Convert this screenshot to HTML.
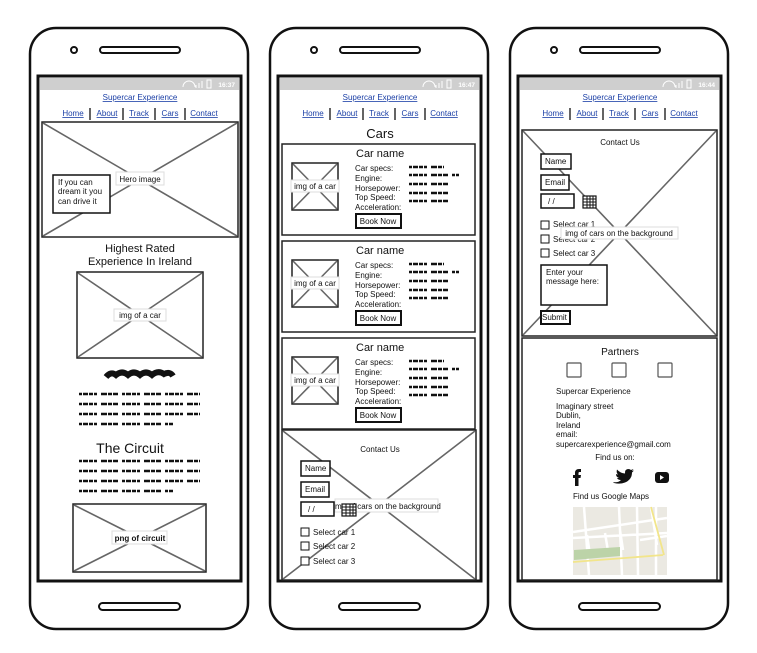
<!DOCTYPE html>
<html><head><meta charset="utf-8"><style>
html,body{margin:0;padding:0;background:#fff;width:757px;height:653px;overflow:hidden}
svg{display:block}
text{font-family:"Liberation Sans",sans-serif;fill:#111}
.lnk{fill:#1b3fa6;text-decoration:underline;font-size:8px}
.lbl{font-size:8px}
.sq{stroke:#111;stroke-width:2.4;stroke-dasharray:3 1 5 1 4 1 3 4 6 1 4 1 5 4;fill:none}
.x{stroke:#666;stroke-width:1.6}
.tag{fill:#fff;stroke:#ddd;stroke-width:1}
</style></head><body>
<svg width="757" height="653" viewBox="0 0 757 653" xmlns="http://www.w3.org/2000/svg">
<defs>
<g id="frame">
 <rect x="30" y="28" width="218" height="601" rx="26" fill="#fff" stroke="#111" stroke-width="2.5"/>
 <circle cx="74" cy="50" r="3" fill="none" stroke="#111" stroke-width="2"/>
 <rect x="100" y="47" width="80" height="6" rx="3" fill="none" stroke="#111" stroke-width="2"/>
 <rect x="99" y="603" width="81" height="7" rx="3.5" fill="none" stroke="#111" stroke-width="2"/>
 <rect x="38" y="76" width="203" height="505" fill="#fff" stroke="#111" stroke-width="3"/>
 <rect x="40" y="78" width="199" height="12" fill="#cfcfcf"/>
 <rect x="207" y="80" width="4" height="8" fill="none" stroke="#fff"/>
 <path d="M183 87 a6 6 0 0 1 12 0M196 88v-3M199 88v-5M202 88v-7" fill="none" stroke="#fff"/>
 <text x="140" y="100" text-anchor="middle" class="lnk">Supercar Experience</text>
 <text x="73" y="116" text-anchor="middle" class="lnk">Home</text>
 <text x="107" y="116" text-anchor="middle" class="lnk">About</text>
 <text x="139" y="116" text-anchor="middle" class="lnk">Track</text>
 <text x="170" y="116" text-anchor="middle" class="lnk">Cars</text>
 <text x="204" y="116" text-anchor="middle" class="lnk">Contact</text>
 <path d="M90 108v12M123 108v12M155 108v12M185 108v12" stroke="#111" stroke-width="1.3"/>
</g>
<g id="card">
 <rect x="282" y="0" width="193" height="91" fill="#fff" stroke="#222" stroke-width="1.5"/>
 <rect x="292" y="19" width="46" height="47" fill="#fff" stroke="#222" stroke-width="1.5"/>
 <path d="M293 20L337 65M337 20L293 65" class="x"/>
 <rect x="291" y="36" width="48" height="12" class="tag"/>
 <text x="315" y="45" text-anchor="middle" class="lbl">img of a car</text>
 <text x="356" y="13" style="font-size:11px">Car name</text>
 <text x="355" y="27" class="lbl">Car specs:</text>
 <text x="355" y="37" class="lbl">Engine:</text>
 <text x="355" y="47" class="lbl">Horsepower:</text>
 <text x="355" y="56" class="lbl">Top Speed:</text>
 <text x="355" y="66" class="lbl">Acceleration:</text>
 <path d="M409 23h35M409 31h50M409 40h42M409 49h42M409 57h40" class="sq" stroke-width="2"/>
 <rect x="356" y="70" width="45" height="14" fill="#fff" stroke="#111" stroke-width="2"/>
 <text x="378" y="80" text-anchor="middle" class="lbl">Book Now</text>
</g>
<g id="sqp">
 <path d="M79 0h121M79 10h121M79 20h121M79 30h94" class="sq"/>
</g>
</defs>

<!-- PHONE 1 -->
<use href="#frame"/>
<text x="235" y="87" text-anchor="end" style="font-size:6.5px;fill:#fff;font-weight:bold">16:37</text>
<rect x="42" y="122" width="196" height="115" fill="#fff" stroke="#222" stroke-width="1.5"/>
<path d="M43 123L237 236M237 123L43 236" class="x"/>
<rect x="116" y="172" width="48" height="13" class="tag"/>
<text x="140" y="182" text-anchor="middle" class="lbl">Hero image</text>
<rect x="53" y="175" width="57" height="38" fill="#fff" stroke="#111" stroke-width="1.5"/>
<text x="58" y="185" class="lbl">If you can</text>
<text x="58" y="194" class="lbl">dream it you</text>
<text x="58" y="204" class="lbl">can drive it</text>
<text x="140" y="252" text-anchor="middle" style="font-size:11px">Highest Rated</text>
<text x="140" y="265" text-anchor="middle" style="font-size:11px">Experience In Ireland</text>
<rect x="77" y="272" width="126" height="86" fill="#fff" stroke="#222" stroke-width="1.5"/>
<path d="M78 273L202 357M202 273L78 357" class="x"/>
<rect x="114" y="309" width="52" height="12" class="tag"/>
<text x="140" y="318" text-anchor="middle" class="lbl">img of a car</text>
<path d="M106 377q5-6 10-2 6-5 12 0 6-5 12 0 6-5 12 0 6-5 12-1 6-3 9 2" stroke="#111" stroke-width="6" fill="none"/>
<use href="#sqp" y="394"/>
<text x="130" y="453" text-anchor="middle" style="font-size:14px">The Circuit</text>
<use href="#sqp" y="461"/>
<rect x="73" y="504" width="133" height="68" fill="#fff" stroke="#222" stroke-width="1.5"/>
<path d="M74 505L205 571M205 505L74 571" class="x"/>
<rect x="112" y="531" width="55" height="13" class="tag"/>
<text x="140" y="541" text-anchor="middle" style="font-size:8px;font-weight:bold">png of circuit</text>

<!-- PHONE 2 -->
<g transform="translate(240,0)"><use href="#frame"/></g>
<text x="475" y="87" text-anchor="end" style="font-size:6.5px;fill:#fff;font-weight:bold">16:47</text>
<text x="380" y="138" text-anchor="middle" style="font-size:13px">Cars</text>
<use href="#card" y="144"/>
<use href="#card" y="241"/>
<use href="#card" y="338"/>
<rect x="282" y="430" width="194" height="150" fill="#fff" stroke="#222" stroke-width="1.5"/>
<path d="M283 431L475 579M475 431L283 579" class="x"/>
<text x="380" y="452" text-anchor="middle" class="lbl">Contact Us</text>
<rect x="301" y="461" width="29" height="15" fill="#fff" stroke="#111" stroke-width="1.5"/>
<text x="305" y="471" class="lbl">Name</text>
<rect x="301" y="482" width="28" height="15" fill="#fff" stroke="#111" stroke-width="1.5"/>
<text x="305" y="492" class="lbl">Email</text>
<rect x="335" y="499" width="103" height="13" class="tag"/>
<text x="387" y="509" text-anchor="middle" class="lbl">img of cars on the background</text>
<rect x="301" y="502" width="33" height="14" fill="#fff" stroke="#111" stroke-width="1.5"/>
<text x="308" y="512" class="lbl">/  /</text>
<rect x="342" y="504" width="14" height="12" fill="#fff" stroke="#111" stroke-width="1.2"/>
<path d="M342 507h14M342 510h14M342 513h14M346 504v12M350 504v12M353 504v12" stroke="#111"/>
<rect x="301" y="528" width="8" height="8" fill="#fff" stroke="#111"/>
<text x="313" y="535" class="lbl">Select car 1</text>
<rect x="301" y="542" width="8" height="8" fill="#fff" stroke="#111"/>
<text x="313" y="549" class="lbl">Select car 2</text>
<rect x="301" y="557" width="8" height="8" fill="#fff" stroke="#111"/>
<text x="313" y="564" class="lbl">Select car 3</text>

<!-- PHONE 3 -->
<g transform="translate(480,0)"><use href="#frame"/></g>
<text x="715" y="87" text-anchor="end" style="font-size:6.5px;fill:#fff;font-weight:bold">16:44</text>
<rect x="522" y="130" width="195" height="206" fill="#fff" stroke="#222" stroke-width="1.5"/>
<path d="M523 131L716 335M716 131L523 335" class="x"/>
<text x="620" y="145" text-anchor="middle" class="lbl">Contact Us</text>
<rect x="541" y="154" width="30" height="15" fill="#fff" stroke="#111" stroke-width="1.5"/>
<text x="545" y="164" class="lbl">Name</text>
<rect x="541" y="175" width="28" height="15" fill="#fff" stroke="#111" stroke-width="1.5"/>
<text x="545" y="185" class="lbl">Email</text>
<rect x="541" y="194" width="33" height="14" fill="#fff" stroke="#111" stroke-width="1.5"/>
<text x="548" y="204" class="lbl">/  /</text>
<rect x="583" y="196" width="13" height="12" fill="#fff" stroke="#111" stroke-width="1.2"/>
<path d="M583 199h13M583 202h13M583 205h13M587 196v12M590 196v12M593 196v12" stroke="#111"/>
<rect x="541" y="221" width="8" height="8" fill="#fff" stroke="#111"/>
<text x="553" y="227" class="lbl">Select car 1</text>
<rect x="541" y="235" width="8" height="8" fill="#fff" stroke="#111"/>
<text x="553" y="242" class="lbl">Select car 2</text>
<rect x="541" y="249" width="8" height="8" fill="#fff" stroke="#111"/>
<text x="553" y="256" class="lbl">Select car 3</text>
<rect x="561" y="227" width="117" height="12" class="tag"/>
<text x="619" y="236" text-anchor="middle" class="lbl">img of cars on the background</text>
<rect x="541" y="265" width="66" height="40" fill="#fff" stroke="#111" stroke-width="1.5"/>
<text x="546" y="275" class="lbl">Enter your</text>
<text x="546" y="284" class="lbl">message here:</text>
<rect x="541" y="311" width="29" height="13" fill="#fff" stroke="#111" stroke-width="2"/>
<text x="542" y="320" class="lbl">Submit</text>
<rect x="522" y="338" width="195" height="242" fill="#fff" stroke="#222" stroke-width="1.5"/>
<text x="620" y="355" text-anchor="middle" style="font-size:10px">Partners</text>
<rect x="567" y="363" width="14" height="14" rx="1" fill="#fff" stroke="#555" stroke-width="1.2"/>
<rect x="612" y="363" width="14" height="14" rx="1" fill="#fff" stroke="#555" stroke-width="1.2"/>
<rect x="658" y="363" width="14" height="14" rx="1" fill="#fff" stroke="#555" stroke-width="1.2"/>
<text x="556" y="394" class="lbl">Supercar Experience</text>
<text x="556" y="409" class="lbl">Imaginary street</text>
<text x="556" y="418" class="lbl">Dublin,</text>
<text x="556" y="428" class="lbl">Ireland</text>
<text x="556" y="437" class="lbl">email:</text>
<text x="556" y="447" class="lbl">supercarexperience@gmail.com</text>
<text x="615" y="460" text-anchor="middle" class="lbl">Find us on:</text>
<path d="M575 486v-8h-2v-3h2v-2q0-4 4-4h2v3h-1.5q-1 0-1 1v2h2.5l-.5 3h-2v8z" fill="#111"/>
<path d="M613 482q5 1 8-2q-3 0-4-2h2q-3-1-3-4q1 .5 2 .5q-2-2-1-5q3 3.5 8 4q-.5-4 3-4.5q2 0 3 1l2.5-1-1.5 2 2-.5-2 2q0 7-7 10q-5 2-11 .5z" fill="#111"/>
<rect x="655" y="472" width="14" height="11" rx="3" fill="#111"/>
<path d="M660 475v5l4-2.5z" fill="#fff"/>
<text x="573" y="499" class="lbl">Find us Google Maps</text>
<rect x="573" y="507" width="94" height="68" fill="#ebe9e2"/>
<path d="M584 507l5 68M619 507l3 68M637 507l1 68M656 507l0 68M573 532l94-14M573 538l94-5M640 540l27-4M587 535l3 20M605 533l3 18M620 530l3 20M651 507l6 38" stroke="#fff" stroke-width="2.5"/>
<path d="M574 550l46-3 0 9-46 4z" fill="#bcd3a8"/>
<path d="M573 562l90-7M651 507l13 48" stroke="#f2e58a" stroke-width="1.8" fill="none"/>
</svg>
</body></html>
